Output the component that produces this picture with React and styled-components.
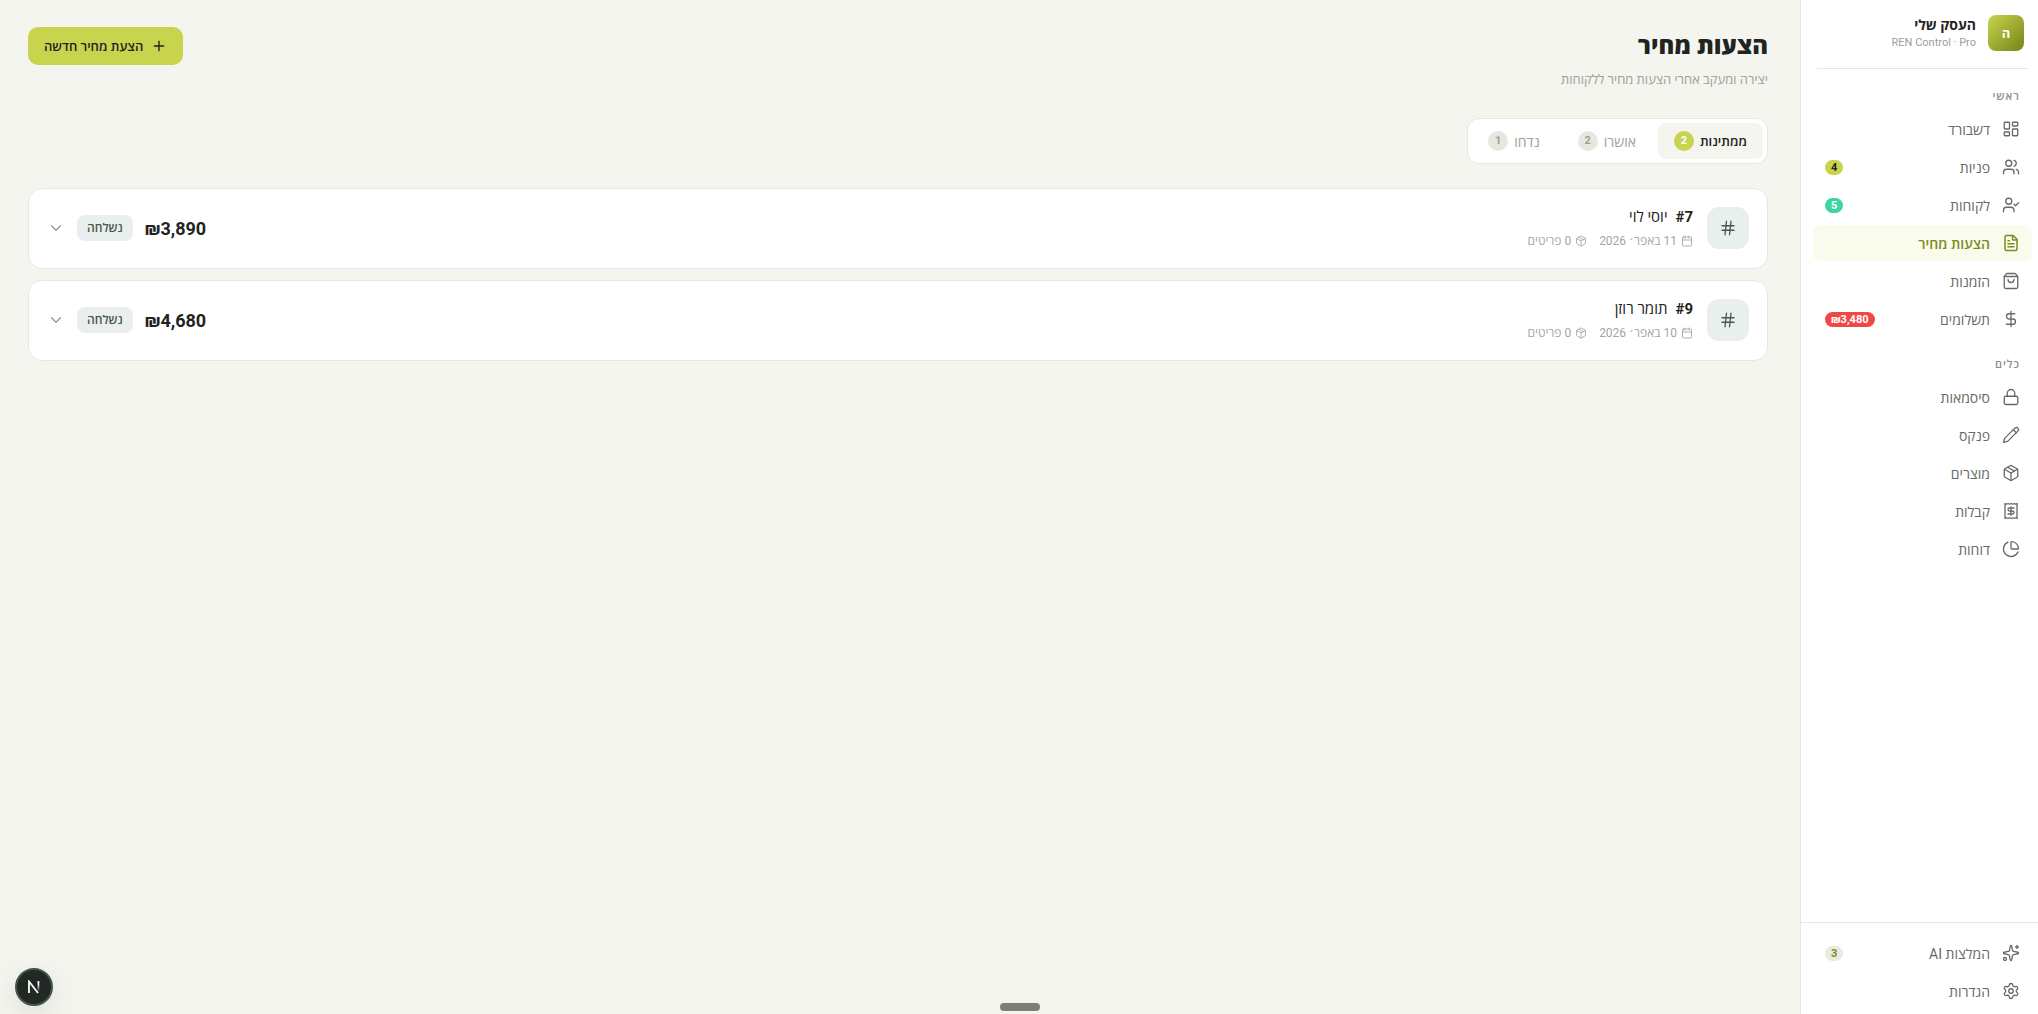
import React, { useState } from "react";
import styled, { createGlobalStyle } from "styled-components";
import {
  Calendar,
  ChartPie,
  ChevronDown,
  DollarSign,
  FileText,
  Hash,
  LayoutDashboard,
  Lock,
  Package,
  Pencil,
  Plus,
  Settings,
  ShoppingBag,
  Sparkles,
  UserCheck,
  Users,
} from "lucide-react";

const GlobalStyle = createGlobalStyle`
  * {
    box-sizing: border-box;
  }
  body {
    margin: 0;
    background: #f4f5ef;
    color: #1f2420;
    font-family: Roboto, "Open Sans", "DejaVu Sans", sans-serif;
    font-size: 14px;
  }
  button {
    font-family: inherit;
  }
`;

const StyledPage = styled.div`
  display: flex;
  min-height: 100vh;
`;

const StyledSidebar = styled.aside`
  position: sticky;
  top: 0;
  display: flex;
  flex-direction: column;
  flex-shrink: 0;
  width: 238px;
  height: 100vh;
  overflow: hidden;
  background: #fff;
  border-inline-end: 1px solid #e6e8e0;
`;

const StyledBrand = styled.div`
  display: flex;
  gap: 12px;
  margin-inline: 10px 16px;
  padding: 15px 4px 17px;
  border-bottom: 1px solid #e6e8e0;
`;

const StyledAvatar = styled.div`
  display: flex;
  align-items: center;
  justify-content: center;
  width: 36px;
  height: 36px;
  border-radius: 8px;
  background: linear-gradient(135deg, #c8d44e, #758417);
  color: #fff;
  font-size: 13px;
  font-weight: 700;
`;

const StyledBrandText = styled.div`
  display: flex;
  flex-direction: column;
`;

const StyledBrandName = styled.strong`
  font-size: 14px;
  font-weight: 700;
  line-height: 20px;
`;

const StyledBrandPlan = styled.span`
  color: #9ba196;
  font-size: 11px;
  line-height: 16px;
`;

const StyledNav = styled.nav`
  display: flex;
  flex: 1;
  flex-direction: column;
  padding: 20px 6px 0 12px;
`;

const StyledNavTitle = styled.h2`
  margin: 0;
  padding: 0 12px;
  color: #8a9086;
  font-size: 11px;
  font-weight: 600;
  letter-spacing: 1px;
  line-height: 16px;
`;

const StyledNavList = styled.ul`
  display: flex;
  flex-direction: column;
  gap: 2px;
  margin: 0;
  padding: 6px 0 20px;
  list-style: none;
`;

const StyledNavLink = styled.a`
  display: flex;
  align-items: center;
  gap: 12px;
  height: 36px;
  padding: 0 12px;
  border-radius: 8px;
  background: ${({ $active }) => ($active ? "#f9fbec" : "transparent")};
  color: ${({ $active }) => ($active ? "#7d8c1b" : "#656b62")};
  font-size: 14px;
  font-weight: ${({ $active }) => ($active ? 600 : 400)};
  text-decoration: none;
`;

const badgeTones = {
  lime: { background: "#c8d44e", color: "#1f2420" },
  green: { background: "#3ed6a0", color: "#fff" },
  red: { background: "#f04747", color: "#fff" },
  muted: { background: "#e9ebe3", color: "#7d8c1b" },
};

const StyledBadge = styled.span`
  min-width: 18px;
  margin-inline-start: auto;
  padding: 0 6px;
  border-radius: 8px;
  background: ${({ $tone }) => badgeTones[$tone].background};
  color: ${({ $tone }) => badgeTones[$tone].color};
  font-size: 11px;
  font-weight: 700;
  line-height: 15px;
  text-align: center;
`;

const StyledSidebarFooter = styled.div`
  padding: 6px 6px 0 12px;
  border-top: 1px solid #e6e8e0;

  ${StyledNavList} {
    padding-bottom: 5px;
  }
`;

const StyledMain = styled.main`
  flex: 1;
  min-width: 0;
  padding: 27px 32px 27px 28px;
`;

const StyledHeader = styled.header`
  display: flex;
  align-items: flex-start;
  justify-content: space-between;
`;

const StyledTitle = styled.h1`
  margin: 0;
  font-size: 24px;
  font-weight: 800;
  line-height: 38px;
`;

const StyledSubtitle = styled.p`
  margin: 4px 0 0;
  color: #9ba196;
  font-size: 13px;
  line-height: 22px;
`;

const StyledNewButton = styled.button`
  display: flex;
  align-items: center;
  gap: 8px;
  height: 38px;
  padding: 0 16px;
  border: 0;
  border-radius: 10px;
  background: #c8d44e;
  color: #1f2420;
  font-size: 13px;
  font-weight: 600;
  cursor: pointer;
`;

const StyledTabs = styled.div`
  display: flex;
  gap: 6px;
  width: fit-content;
  margin-top: 27px;
  padding: 4px;
  border: 1px solid #e6e8e0;
  border-radius: 12px;
  background: #fff;
`;

const StyledTab = styled.button`
  display: flex;
  align-items: center;
  gap: 6px;
  height: 36px;
  padding: 0 16px;
  border: 0;
  border-radius: 8px;
  background: ${({ $active }) => ($active ? "#f4f5ef" : "transparent")};
  color: ${({ $active }) => ($active ? "#1f2420" : "#9ba196")};
  font-size: ${({ $active }) => ($active ? 13 : 14)}px;
  font-weight: ${({ $active }) => ($active ? 600 : 500)};
  cursor: pointer;
`;

const StyledTabCount = styled.span`
  width: 20px;
  border-radius: 50%;
  background: ${({ $active }) => ($active ? "#c8d44e" : "#e6e8e0")};
  color: ${({ $active }) => ($active ? "#fff" : "#9ba196")};
  font-size: 11px;
  font-weight: 700;
  line-height: 20px;
  text-align: center;
`;

const StyledQuoteList = styled.div`
  display: flex;
  flex-direction: column;
  gap: 11px;
  margin-top: 24px;
`;

const StyledQuote = styled.article`
  display: flex;
  align-items: center;
  gap: 14px;
  height: 81px;
  padding: 0 18px 1px;
  border: 1px solid #e6e8e0;
  border-radius: 14px;
  background: #fff;
`;

const StyledQuoteIcon = styled.div`
  display: flex;
  align-items: center;
  justify-content: center;
  width: 42px;
  height: 42px;
  border-radius: 12px;
  background: #e9efee;
  color: #4a564d;
`;

const StyledQuoteInfo = styled.div`
  display: flex;
  flex: 1;
  flex-direction: column;
  gap: 4px;
  padding-top: 2px;
`;

const StyledQuoteName = styled.div`
  display: flex;
  align-items: center;
  gap: 8px;
  font-size: 15px;
  font-weight: 500;
  line-height: 20px;

  strong {
    font-weight: 700;
  }
`;

const StyledQuoteMeta = styled.div`
  display: flex;
  gap: 12px;
  color: #a3a89e;
  font-size: 12px;
  line-height: 20px;

  span {
    display: flex;
    align-items: center;
    gap: 4px;
  }
`;

const StyledQuoteEnd = styled.div`
  display: flex;
  align-items: center;
  gap: 12px;
`;

const StyledPrice = styled.strong`
  font-size: 18px;
  font-weight: 700;
`;

const StyledStatus = styled.span`
  padding: 0 10px;
  border-radius: 8px;
  background: #e9efee;
  color: #4a564d;
  font-size: 12px;
  font-weight: 600;
  line-height: 26px;
`;

const StyledExpand = styled.button`
  display: flex;
  padding: 0;
  border: 0;
  background: none;
  color: #8a9086;
  cursor: pointer;
`;

const StyledDevButton = styled.button`
  position: fixed;
  bottom: 8px;
  left: 15px;
  display: flex;
  align-items: center;
  justify-content: center;
  width: 38px;
  height: 38px;
  padding: 0;
  border: 2px solid #44564c;
  border-radius: 50%;
  background: #222823;
  box-shadow: 0 8px 28px rgba(0, 0, 0, 0.1);
  cursor: pointer;
`;

const StyledHandle = styled.div`
  position: fixed;
  bottom: 3px;
  left: 50%;
  width: 40px;
  height: 8px;
  margin-left: -19px;
  border-radius: 4px;
  background: #7b8074;
`;

const mainItems = [
  { label: "דשבורד", icon: LayoutDashboard },
  { label: "פניות", icon: Users, badge: "4", tone: "lime" },
  { label: "לקוחות", icon: UserCheck, badge: "5", tone: "green" },
  { label: "הצעות מחיר", icon: FileText, active: true },
  { label: "הזמנות", icon: ShoppingBag },
  { label: "תשלומים", icon: DollarSign, badge: "₪3,480", tone: "red" },
];

const toolItems = [
  { label: "סיסמאות", icon: Lock },
  { label: "פנקס", icon: Pencil },
  { label: "מוצרים", icon: Package },
  { label: "קבלות", icon: ReceiptIcon },
  { label: "דוחות", icon: ChartPie },
];

const footerItems = [
  { label: "המלצות AI", icon: Sparkles, badge: "3", tone: "muted" },
  { label: "הגדרות", icon: Settings },
];

const tabs = [
  { label: "ממתינות", count: 2 },
  { label: "אושרו", count: 2 },
  { label: "נדחו", count: 1 },
];

const quotes = [
  { id: 7, name: "יוסי לוי", date: "11 באפר׳ 2026", price: "₪3,890" },
  { id: 9, name: "תומר רוזן", date: "10 באפר׳ 2026", price: "₪4,680" },
];

function ReceiptIcon({ size = 18, strokeWidth = 2 }) {
  return (
    <svg
      width={size}
      height={size}
      viewBox="0 0 24 24"
      fill="none"
      stroke="currentColor"
      strokeWidth={strokeWidth}
      strokeLinecap="round"
      strokeLinejoin="round"
      aria-hidden="true"
    >
      <path d="M4 2v20l2-1 2 1 2-1 2 1 2-1 2 1 2-1 2 1V2l-2 1-2-1-2 1-2-1-2 1-2-1-2 1Z" />
      <path d="M16 8h-6a2 2 0 1 0 0 4h4a2 2 0 1 1 0 4H8" />
      <path d="M12 17.5v-11" />
    </svg>
  );
}

const NavItems = ({ items }) => (
  <StyledNavList>
    {items.map(({ label, icon: Icon, badge, tone, active }) => (
      <li key={label}>
        <StyledNavLink href="#" $active={active}>
          <Icon size={18} strokeWidth={active ? 2 : 1.75} />
          {label}
          {badge && <StyledBadge $tone={tone}>{badge}</StyledBadge>}
        </StyledNavLink>
      </li>
    ))}
  </StyledNavList>
);

const Sidebar = () => (
  <StyledSidebar>
    <StyledBrand>
      <StyledAvatar>ה</StyledAvatar>
      <StyledBrandText>
        <StyledBrandName>העסק שלי</StyledBrandName>
        <StyledBrandPlan dir="ltr">REN Control · Pro</StyledBrandPlan>
      </StyledBrandText>
    </StyledBrand>
    <StyledNav>
      <StyledNavTitle>ראשי</StyledNavTitle>
      <NavItems items={mainItems} />
      <StyledNavTitle>כלים</StyledNavTitle>
      <NavItems items={toolItems} />
    </StyledNav>
    <StyledSidebarFooter>
      <NavItems items={footerItems} />
    </StyledSidebarFooter>
  </StyledSidebar>
);

const Quote = ({ quote }) => (
  <StyledQuote>
    <StyledQuoteIcon>
      <Hash size={18} strokeWidth={1.75} />
    </StyledQuoteIcon>
    <StyledQuoteInfo>
      <StyledQuoteName>
        <strong>#{quote.id}</strong>
        {quote.name}
      </StyledQuoteName>
      <StyledQuoteMeta>
        <span>
          <Calendar size={12} strokeWidth={1.75} />
          {quote.date}
        </span>
        <span>
          <Package size={12} strokeWidth={1.75} />0 פריטים
        </span>
      </StyledQuoteMeta>
    </StyledQuoteInfo>
    <StyledQuoteEnd>
      <StyledPrice>{quote.price}</StyledPrice>
      <StyledStatus>נשלחה</StyledStatus>
      <StyledExpand aria-label="פרטי הצעה">
        <ChevronDown size={18} strokeWidth={1.5} />
      </StyledExpand>
    </StyledQuoteEnd>
  </StyledQuote>
);

const App = () => {
  const [currentTab, setCurrentTab] = useState(0);

  return (
    <StyledPage dir="rtl" lang="he">
      <GlobalStyle />
      <Sidebar />
      <StyledMain>
        <StyledHeader>
          <div>
            <StyledTitle>הצעות מחיר</StyledTitle>
            <StyledSubtitle>יצירה ומעקב אחרי הצעות מחיר ללקוחות</StyledSubtitle>
          </div>
          <StyledNewButton>
            <Plus size={16} />
            הצעת מחיר חדשה
          </StyledNewButton>
        </StyledHeader>
        <StyledTabs>
          {tabs.map((tab, index) => (
            <StyledTab
              key={tab.label}
              $active={index === currentTab}
              onClick={() => setCurrentTab(index)}
            >
              {tab.label}
              <StyledTabCount $active={index === currentTab}>
                {tab.count}
              </StyledTabCount>
            </StyledTab>
          ))}
        </StyledTabs>
        <StyledQuoteList>
          {quotes.map((quote) => (
            <Quote key={quote.id} quote={quote} />
          ))}
        </StyledQuoteList>
      </StyledMain>
      <StyledDevButton aria-label="Next.js">
        <svg width="14" height="14" viewBox="0 0 14 14" fill="none">
          <defs>
            <linearGradient id="nextStem" x1="0" y1="0" x2="0" y2="1">
              <stop offset="0.3" stopColor="#fff" />
              <stop offset="1" stopColor="#fff" stopOpacity="0.1" />
            </linearGradient>
          </defs>
          <path d="M2 13V1.5L11 13" stroke="#fff" strokeWidth="1.8" />
          <rect x="10.6" y="1" width="1.7" height="10" fill="url(#nextStem)" />
        </svg>
      </StyledDevButton>
      <StyledHandle />
    </StyledPage>
  );
};

export default App;
